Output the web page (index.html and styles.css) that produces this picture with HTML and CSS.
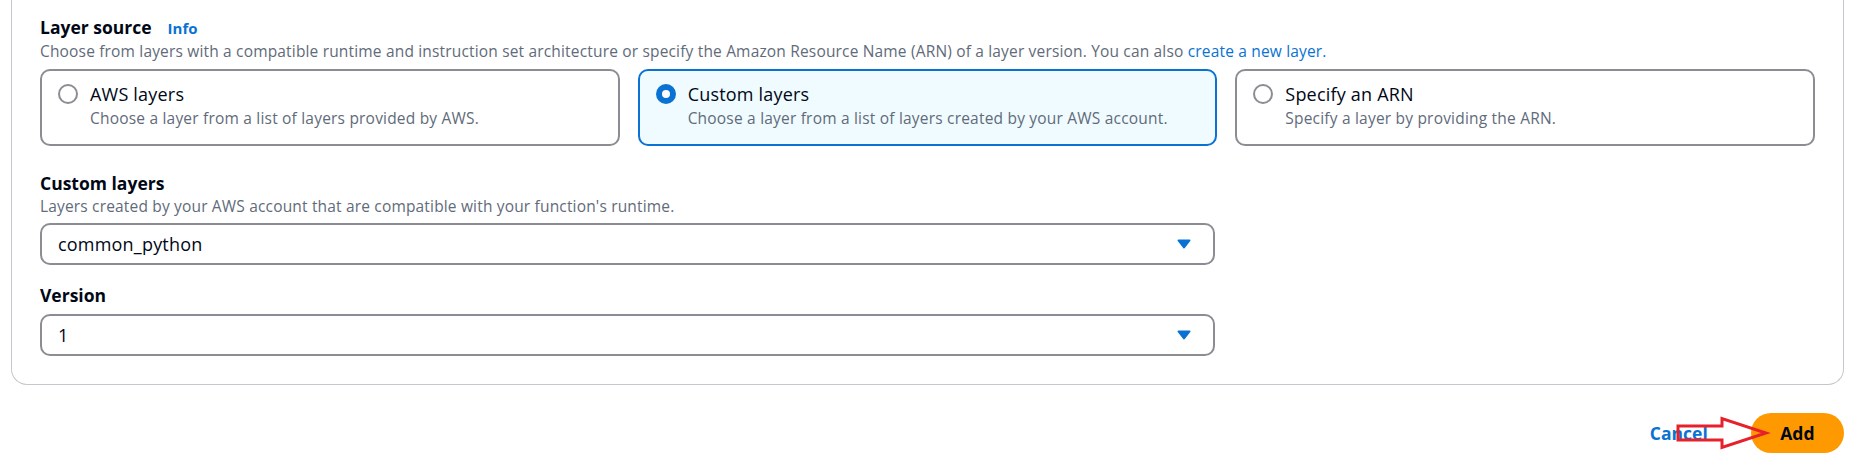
FILE: index.html
```html
<!DOCTYPE html>
<html lang="en">
<head>
<meta charset="utf-8">
<title>Add layer</title>
<link rel="stylesheet" href="styles.css">
</head>
<body>
<div class="page">
  <div class="container">
    <div class="heading"><span>Layer source</span><a class="info">Info</a></div>
    <div class="desc">Choose from layers with a compatible runtime and instruction set architecture or specify the Amazon Resource Name (ARN) of a layer version. You can also <a class="link">create a new layer.</a></div>
    <div class="tiles">
      <div class="tile">
        <span class="radio"></span>
        <div class="tile-text">
          <div class="tile-label">AWS layers</div>
          <div class="tile-desc">Choose a layer from a list of layers provided by AWS.</div>
        </div>
      </div>
      <div class="tile tile-selected">
        <span class="radio radio-checked"></span>
        <div class="tile-text">
          <div class="tile-label">Custom layers</div>
          <div class="tile-desc">Choose a layer from a list of layers created by your AWS account.</div>
        </div>
      </div>
      <div class="tile">
        <span class="radio"></span>
        <div class="tile-text">
          <div class="tile-label">Specify an ARN</div>
          <div class="tile-desc">Specify a layer by providing the ARN.</div>
        </div>
      </div>
    </div>

    <div class="field-label">Custom layers</div>
    <div class="field-desc">Layers created by your AWS account that are compatible with your function's runtime.</div>
    <div class="select">
      <span>common_python</span>
      <svg class="caret" width="14" height="10" viewBox="0 0 14 10"><path d="M1.5 1.5 L12.5 1.5 L7 8.5 Z" fill="#0972d3" stroke="#0972d3" stroke-width="2" stroke-linejoin="round"/></svg>
    </div>

    <div class="field-label field-label-2">Version</div>
    <div class="select select-2">
      <span>1</span>
      <svg class="caret" width="14" height="10" viewBox="0 0 14 10"><path d="M1.5 1.5 L12.5 1.5 L7 8.5 Z" fill="#0972d3" stroke="#0972d3" stroke-width="2" stroke-linejoin="round"/></svg>
    </div>
  </div>

  <div class="footer">
    <a class="cancel">Cancel</a>
    <span class="add">Add</span>
  </div>

  <svg class="annot" width="110" height="45" viewBox="0 0 110 45">
    <polygon points="8,16 52,16 52,8.5 96,23 52,37.5 52,30 8,30" fill="none" stroke="#e8202a" stroke-width="3" stroke-linejoin="miter"/>
  </svg>
</div>
</body>
</html>
```
FILE: styles.css
```css
* { box-sizing: border-box; }

body {
  margin: 0;
  font-family: "Open Sans", sans-serif;
  color: #000716;
  background: #ffffff;
}

.page {
  position: relative;
  width: 1858px;
  height: 475px;
  overflow: hidden;
}

.container {
  margin-left: 11px;
  width: 1833px;
  border: 1px solid #c6c6cd;
  border-top: none;
  border-radius: 0 0 16px 16px;
  padding: 16px 28px 28px;
}

.heading {
  height: 22px;
  font-weight: 700;
  font-size: 17.5px;
  line-height: 22px;
}

.info {
  margin-left: 16px;
  color: #0972d3;
  font-size: 15px;
  line-height: 1;
}

.desc,
.field-desc {
  font-size: 15.5px;
  line-height: 20px;
  letter-spacing: 0.17px;
  color: #5f6b7a;
  margin-top: 3px;
}

.link {
  color: #0972d3;
}

.tiles {
  display: grid;
  grid-template-columns: repeat(3, 1fr);
  gap: 18px;
  margin-top: 8px;
}

.tile {
  height: 77px;
  border: 2px solid #8c8c94;
  border-radius: 10px;
  padding: 11px 16px 16px 16px;
  display: flex;
  align-items: flex-start;
  gap: 12px;
  background: #ffffff;
}

.tile-selected {
  border-color: #0972d3;
  background: #f0fbff;
}

.radio {
  flex: none;
  width: 20px;
  height: 20px;
  margin-top: 2px;
  border-radius: 50%;
  border: 2px solid #8c8c94;
  background: #ffffff;
}

.radio-checked {
  border: 6px solid #0972d3;
}

.tile-label {
  font-size: 18px;
  line-height: 24px;
  letter-spacing: 0.2px;
}

.tile-desc {
  font-size: 15.5px;
  line-height: 20px;
  letter-spacing: 0.2px;
  color: #5f6b7a;
  margin-top: 2px;
}

.field-label {
  margin-top: 25.5px;
  height: 22px;
  font-weight: 700;
  font-size: 17.5px;
  line-height: 22px;
}

.field-desc {
  margin-top: 2.5px;
}

.field-label-2 {
  margin-top: 19px;
}

.select {
  margin-top: 7px;
  width: 1175px;
  height: 42px;
  border: 2px solid #8c8c94;
  border-radius: 10px;
  padding: 0 22px 0 16px;
  display: flex;
  align-items: center;
  justify-content: space-between;
  font-size: 18px;
  letter-spacing: 0.2px;
}

.select-2 {
  margin-top: 8px;
}

.caret {
  display: block;
}

.footer {
  margin-left: 11px;
  width: 1833px;
  margin-top: 28px;
  display: flex;
  justify-content: flex-end;
  align-items: center;
  gap: 43px;
}

.cancel {
  color: #0972d3;
  font-weight: 700;
  font-size: 17.5px;
}

.add {
  height: 40px;
  padding: 0 29.5px;
  border-radius: 20px;
  background: #ff9900;
  display: flex;
  align-items: center;
  font-weight: 700;
  font-size: 17.5px;
  color: #000716;
}

.annot {
  position: absolute;
  left: 1670px;
  top: 410px;
}
```
